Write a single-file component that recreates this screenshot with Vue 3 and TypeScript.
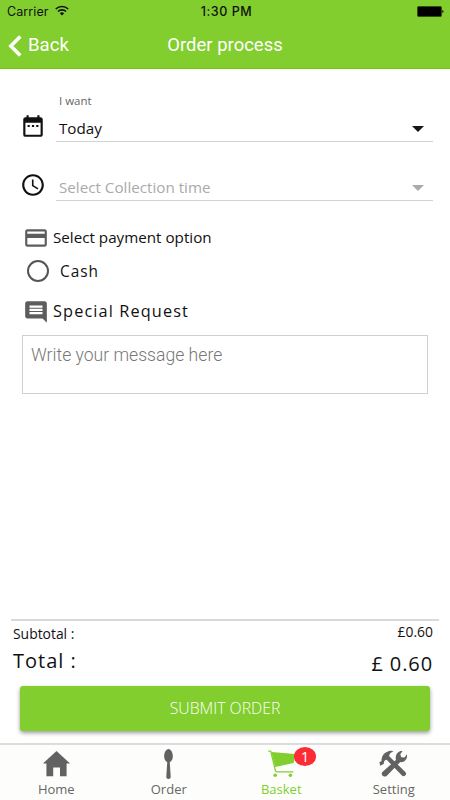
<script setup lang="ts">
import { ref } from 'vue'

const message = ref('')
const cash = ref(false)
const basketCount = ref(1)
</script>

<template>
  <div class="screen">
    <header class="header">
      <div class="status">
        <div class="carrier">
          <span>Carrier</span>
          <svg class="wifi" viewBox="0 0 14 11">
            <g fill="none" stroke="#111" stroke-width="1.7">
              <path d="M.8 4a9 9 0 0 1 12.4 0" />
              <path d="M3 6.5a5.8 5.8 0 0 1 8 0" />
            </g>
            <path d="M4.8 8.3a3.3 3.3 0 0 1 4.4 0L7 10.6z" fill="#111" />
          </svg>
        </div>
        <span class="time">1:30 PM</span>
        <svg class="battery" viewBox="0 0 27 11">
          <rect x=".5" y=".5" width="24" height="10" rx="1" fill="#000" stroke="#2b4a0a" stroke-width=".8" />
          <path d="M25.3 4c1.6.4 1.6 2.6 0 3z" fill="#000" />
        </svg>
      </div>
      <nav class="nav">
        <div class="back">
          <svg class="chevron" viewBox="0 0 14 22"><path d="M12.300 1.500 2.800 11l9.500 9.500" fill="none" stroke="#fff" stroke-width="3.600" /></svg>
          <span>Back</span>
        </div>
        <h1 class="title">Order process</h1>
      </nav>
    </header>

    <main class="form">
      <div class="field-row first">
        <svg class="icon" viewBox="0 0 24 24"><path d="M9 11H7v2h2v-2zm4 0h-2v2h2v-2zm4 0h-2v2h2v-2zm2-7h-1V2h-2v2H8V2H6v2H5c-1.11 0-1.99.9-1.99 2L3 20a2 2 0 0 0 2 2h14c1.1 0 2-.9 2-2V6c0-1.1-.9-2-2-2zm0 16H5V9h14v11z" /></svg>
        <div class="field">
          <label class="field-label">I want</label>
          <div class="select"><span class="today">Today</span><i class="arrow"></i></div>
        </div>
      </div>
      <div class="field-row second">
        <svg class="icon" viewBox="0 0 24 24"><path d="M11.99 2C6.47 2 2 6.48 2 12s4.47 10 9.99 10C17.52 22 22 17.52 22 12S17.52 2 11.99 2zM12 20c-4.42 0-8-3.58-8-8s3.58-8 8-8 8 3.58 8 8-3.58 8-8 8zm.5-13H11v6l5.25 3.15.75-1.23-4.5-2.67z" /></svg>
        <div class="field">
          <div class="select muted"><span class="collection">Select Collection time</span><i class="arrow"></i></div>
        </div>
      </div>

      <div class="heading payment">
        <svg class="icon gray" viewBox="0 0 24 24"><path d="M20 4H4c-1.11 0-1.99.89-1.99 2L2 18c0 1.11.89 2 2 2h16c1.11 0 2-.89 2-2V6c0-1.11-.89-2-2-2zm0 14H4v-6h16v6zm0-10H4V6h16v2z" /></svg>
        <span>Select payment option</span>
      </div>
      <div class="option" @click="cash = !cash">
        <span class="radio" :class="{ checked: cash }"></span>
        <span>Cash</span>
      </div>
      <div class="heading special">
        <svg class="icon gray" viewBox="0 0 24 24"><path d="M20 2H4c-1.1 0-2 .9-2 2v12c0 1.1.9 2 2 2h14l4 4V4c0-1.1-.9-2-2-2zm-2 12H6v-2h12v2zm0-3H6V9h12v2zm0-3H6V6h12v2z" /></svg>
        <span>Special Request</span>
      </div>
      <textarea v-model="message" class="message" placeholder="Write your message here"></textarea>
    </main>

    <section class="summary">
      <div class="line subtotal"><span>Subtotal :</span><span class="amount">£0.60</span></div>
      <div class="line total"><span>Total :</span><span class="amount">£ 0.60</span></div>
    </section>
    <button class="submit">SUBMIT ORDER</button>

    <footer class="tabs">
      <div class="tab">
        <svg class="tab-icon" viewBox="0 0 32 32"><path d="M16 2 2 15h3.600v13h7v-9h7v9h6.800V15H30z" /></svg>
        <span class="home-text">Home</span>
      </div>
      <div class="tab">
        <svg class="tab-icon" viewBox="0 0 32 32"><path d="M16 0c-2.600 0-4.500 4-4.500 7.600 0 3 1.300 5.200 3.200 6.100L13.700 29c0 2.700 4.600 2.700 4.600 0l-1-15.300c1.900-.9 3.200-3.100 3.200-6.100C20.500 4 18.600 0 16 0z" /></svg>
        <span class="order-text">Order</span>
      </div>
      <div class="tab active">
        <svg class="tab-icon" viewBox="0 0 32 32">
          <path d="M5.600 3 30 5.200 28.600 14.500 9.500 18.500z" />
          <path d="M2.300 2.200h2.600L9.600 22c.3 1.200.8 1.600 2 1.600h16.600" fill="none" stroke="#81ce2e" stroke-width="1.300" />
          <circle cx="9.500" cy="27" r="1.800" /><circle cx="25.200" cy="27" r="1.800" />
        </svg>
        <span class="basket-text">Basket</span>
        <span class="badge">{{ basketCount }}</span>
      </div>
      <div class="tab">
        <svg class="tab-icon" viewBox="0 0 32 32">
          <path d="M2.200 17.200 1.500 13.400 3.600 12.700C3.500 7.500 6 3.500 11.500 2c2-.4 3.500-.2 4.500.3-3 1.300-4.700 3-4.400 5.200L28.400 23.900c1 1.300.7 2.400-.4 3.400-1.200 1.100-2.500 1-3.500-.2L9 11.200c-1.200 0-2 .8-2.700 1.700l-.4 2.500z" />
          <path d="M4.300 24.100 18.500 11.300c-1-4.400.9-8.300 4.800-9.300l2 .1-2.300 3.400 1 2.900 3.400.3 2.500-3.200c.8 4.700-2.300 8.600-6.900 8L8.600 28c-2.800 1.700-6-1.300-4.300-3.900z" />
        </svg>
        <span class="setting-text">Setting</span>
      </div>
    </footer>
  </div>
</template>

<style>
body { margin: 0; background: #fff; }
</style>

<style scoped>
* { box-sizing: border-box; }
.screen { width: 450px; height: 800px; display: flex; flex-direction: column; background: #fff; color: #111; font-family: "Open Sans", "Noto Sans", sans-serif; overflow: hidden; }
.header { height: 69px; background: #81ce2e; border-bottom: 1px solid #72c90c; flex: none; }
.status { height: 23px; padding: 0 6px 0 7px; display: grid; grid-template-columns: 1fr auto 1fr; align-items: center; font: 400 12.500px/23px Inter, sans-serif; color: #111; }
.carrier { display: flex; align-items: center; gap: 6px; letter-spacing: .1px; }
.wifi { width: 14px; height: 11px; margin-bottom: 2px; }
.time { font-weight: 500; letter-spacing: .55px; padding-left: 2px; }
.battery { width: 27px; height: 11px; justify-self: end; margin-bottom: 1px; }
.nav { height: 44px; display: grid; grid-template-columns: 1fr auto 1fr; align-items: center; padding: 0 8px; font-family: Roboto, sans-serif; color: #fff; font-size: 18.600px; }
.back { display: flex; align-items: center; gap: 6px; }
.chevron { width: 14px; height: 22px; margin-top: 1px; }
.title { margin: -1px 0 0; font-size: 18.400px; font-weight: 400; letter-spacing: .05px; }
.form { height: 550px; display: flex; flex-direction: column; padding: 0 17px 0 20px; }
.icon { width: 26px; height: 26px; fill: #111; flex: none; }
.gray { fill: #5d5d5d; }
.field-row { display: flex; align-items: flex-end; gap: 10px; }
.field-row .icon { margin-bottom: 3px; }
.field { flex: 1; border-bottom: 1px solid #d3d3d3; }
.first { height: 73px; }
.second { height: 59px; }
.field-label { display: block; padding-left: 3px; font-size: 11.500px; line-height: 16px; margin-bottom: 5px; color: #666; }
.select { height: 27px; display: flex; align-items: center; justify-content: space-between; padding: 1px 9px 0 3px; font-size: 15.200px; }
.arrow { width: 0; height: 0; border: 6px solid transparent; border-top-color: #151515; border-bottom: 0; margin-top: 1px; }
.muted { color: #aaa; }
.muted .arrow { border-top-color: #aaa; }
.heading { display: flex; align-items: center; }
.heading span { margin-top: -2px; }
.payment { height: 26px; margin: 24px 0 0 3px; gap: 4px; font-size: 15.200px; }
.option { height: 22px; margin: 9px 0 0 7px; display: flex; align-items: center; gap: 11px; font-size: 15.400px; letter-spacing: 1px; }
.radio { width: 22px; height: 22px; border: 2px solid #555; border-radius: 50%; }
.checked { background: #81ce2e; box-shadow: inset 0 0 0 4px #fff; }
.special { height: 26px; margin: 17px 0 0 3px; gap: 4px; font-size: 16.300px; letter-spacing: 1.120px; }
.message { width: 406px; height: 59px; margin: 10px 0 0 2px; padding: 8px; border: 1px solid #d0d0d0; border-radius: 0; resize: none; outline: 0; background: #fff; font: 300 17.600px/22px Roboto, sans-serif; color: #333; }
.message::placeholder { color: #777; opacity: 1; }
.summary { margin: 0 11px; height: 67px; border-top: 2px solid #d9d9d9; padding: 1px 6px 0 2px; }
.line { display: flex; justify-content: space-between; }
.subtotal { height: 24px; font-size: 13.900px; line-height: 24px; }
.subtotal .amount { line-height: 20px; }
.total { font-size: 20px; line-height: 29px; letter-spacing: 1px; }
.total .amount { line-height: 35px; letter-spacing: .9px; }
.submit { flex: none; width: 410px; height: 45px; margin: 0 0 0 20px; padding: 0; border: 0; border-radius: 3px; background: #81ce2e; color: #fff; font: 300 15.800px/45px "Open Sans", sans-serif; box-shadow: 0 2px 4px rgba(0,0,0,.4); }
.tabs { height: 57px; margin-top: 12px; display: grid; grid-template-columns: repeat(4, 112.500px); border-top: 2px solid #ddd; background: #fdfefb; color: #666; }
.tab { position: relative; display: flex; flex-direction: column; align-items: center; padding-top: 4px; font-size: 13px; line-height: 18px; }
.tab-icon { width: 31px; height: 31px; fill: #626262; flex: none; }
.active { color: #81ce2e; }
.active .tab-icon { fill: #81ce2e; }
.badge { position: absolute; left: 69px; top: 2px; width: 22px; height: 19px; border-radius: 50%; background: #fb2c36; color: #fff; text-align: center; font-size: 15px; line-height: 19px; }
</style>
